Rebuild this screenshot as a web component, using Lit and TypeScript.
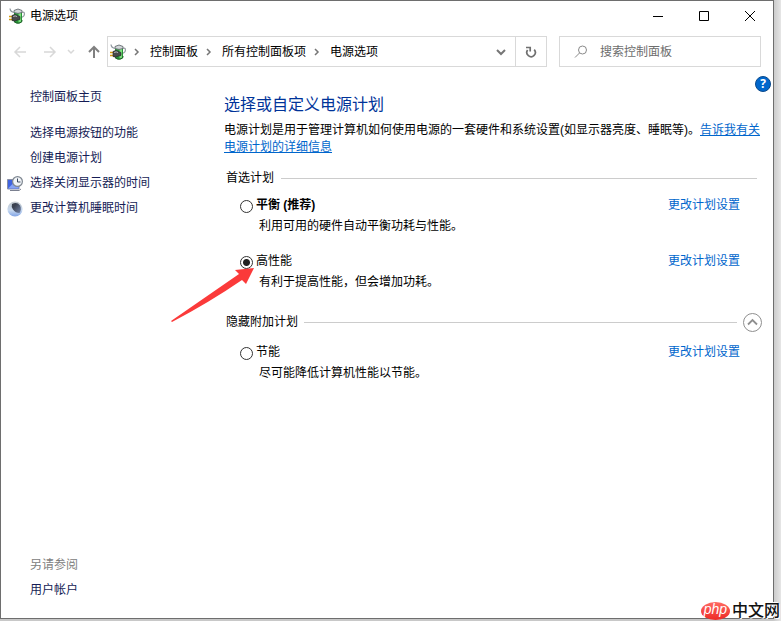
import { LitElement, html, css, svg, nothing } from "lit";
import { customElement, property, state } from "lit/decorators.js";
import { classMap } from "lit/directives/class-map.js";

interface Plan {
  id: string;
  name: string;
  description: string;
  recommended?: boolean;
}

interface Task {
  label: string;
  icon?: "display" | "sleep";
}

const PREFERRED: Plan[] = [
  { id: "balanced", name: "平衡 (推荐)", description: "利用可用的硬件自动平衡功耗与性能。", recommended: true },
  { id: "high", name: "高性能", description: "有利于提高性能，但会增加功耗。" },
];

const ADDITIONAL: Plan[] = [
  { id: "saver", name: "节能", description: "尽可能降低计算机性能以节能。" },
];

const TASKS: Task[] = [
  { label: "选择电源按钮的功能" },
  { label: "创建电源计划" },
  { label: "选择关闭显示器的时间", icon: "display" },
  { label: "更改计算机睡眠时间", icon: "sleep" },
];

const CRUMBS = ["控制面板", "所有控制面板项", "电源选项"];

const taskIcons = {
  display: html`
    <svg width="16" height="16" viewBox="0 0 16 16" aria-hidden="true">
      <path d="M0.5 3.500h11.500v9.500h-11.500z" fill="#3f63e0" stroke="#8a90a4" />
      <path d="M1 12.500l8-8h2.500v8z" fill="#86a3f5" />
      <path d="M3 14.500h9l2-1.500" stroke="#7b8090" fill="none" />
      <circle cx="10.500" cy="5.500" r="4.900" fill="#f1f4f7" stroke="#7f8791" stroke-width="1.200" />
      <path d="M10.500 2.500v3.500h3" stroke="#3b4a60" fill="none" />
    </svg>
  `,
  sleep: html`
    <svg width="16" height="16" viewBox="0 0 16 16" aria-hidden="true">
      <defs>
        <linearGradient id="moon" x1="0" y1="0" x2="0" y2="1">
          <stop offset="0" stop-color="#c3c9cc" />
          <stop offset=".6" stop-color="#c6d8f0" />
          <stop offset="1" stop-color="#7fa3e6" />
        </linearGradient>
        <linearGradient id="shade" x1="0" y1="0" x2="1" y2="1">
          <stop offset=".3" stop-color="#3a4150" />
          <stop offset="1" stop-color="#7486ac" />
        </linearGradient>
      </defs>
      <circle cx="8" cy="8" r="7.600" fill="url(#moon)" />
      <path d="M5 3q5-2.500 8 1.500 2 4-.5 7.500-4 0-6.500-3.500-2-3-1-5.500z" fill="url(#shade)" />
    </svg>
  `,
};

const arrow = (direction: "left" | "right" | "up") => {
  const shapes = {
    left: svg`<path d="M13 7H2M7 2L2 7l5 5" />`,
    right: svg`<path d="M1 7h11M7 2l5 5-5 5" />`,
    up: svg`<path stroke-width="2" d="M7 13V2M2 7l5-5 5 5" />`,
  };
  return html`<svg class="stroke" width="14" height="14" viewBox="0 0 14 14" aria-hidden="true">${shapes[direction]}</svg>`;
};

@customElement("power-icon")
class PowerIcon extends LitElement {
  static styles = css`
    :host {
      display: block;
      width: 16px;
      height: 16px;
    }
    svg {
      display: block;
    }
  `;

  render() {
    return html`
      <svg width="16" height="16" viewBox="0 0 16 16" aria-hidden="true">
        <path d="M12.500 4.500q3-1 3 1.500t-3 3.500" fill="none" stroke="#9aa1a6" stroke-width="1.200" />
        <path d="M5 3h8v11q-4 3-8 0z" fill="#279436" />
        <path d="M9.500 4h2.500v9.500q-1 1-2.500 1z" fill="#7fe07f" />
        <path d="M5 13.500q4 3.500 8 0V12" fill="none" stroke="#1d5a27" stroke-width=".9" />
        <path d="M5 2.500q4-3 8 0v2q-4 1.800-8 0z" fill="#d3d8da" stroke="#565d62" stroke-width=".8" />
        <path d="M1 .5q.3 3.500 4.300 4" fill="none" stroke="#8b949b" stroke-width="1.200" />
        <path d="M0 8.500h4M0 11.500h4" stroke="#d39b12" stroke-width="1.700" />
        <path d="M3 7.500q3-2 5.500 0l2.500 1v3l-2.500.5q-2.500 2-5.500.5z" fill="#48494b" stroke="#222425" stroke-width=".6" />
        <path d="M4.200 8.500q2-1.200 3.800 0" stroke="#b8babb" fill="none" />
      </svg>
    `;
  }
}

@customElement("title-bar")
class TitleBar extends LitElement {
  static styles = css`
    :host {
      display: flex;
      align-items: center;
      height: 29px;
      padding-left: 8px;
    }
    svg {
      display: block;
    }
    .title {
      flex: 1;
      margin: 0 0 0 5px;
      font-size: 12px;
      font-weight: 400;
      line-height: 20px;
    }
    .control {
      display: flex;
      align-items: center;
      justify-content: center;
      width: 46px;
      height: 28px;
      padding: 0;
      border: 0;
      background: none;
    }
    path {
      fill: none;
      stroke: #000;
    }
  `;

  render() {
    return html`
      <power-icon></power-icon>
      <h1 class="title">电源选项</h1>
      <button class="control" aria-label="最小化">
        <svg width="10" height="10"><path d="M0 5.500h10" /></svg>
      </button>
      <button class="control" aria-label="最大化">
        <svg width="10" height="10"><path d="M.5 .5h9v9h-9z" /></svg>
      </button>
      <button class="control" aria-label="关闭">
        <svg width="10" height="10"><path d="M0 0l10 10M10 0L0 10" /></svg>
      </button>
    `;
  }
}

@customElement("address-row")
class AddressRow extends LitElement {
  static styles = css`
    :host {
      display: flex;
      align-items: center;
      padding: 6px 12px 0 12px;
      font-size: 12px;
    }
    svg {
      display: block;
    }
    button {
      display: flex;
      align-items: center;
      justify-content: center;
      padding: 0;
      border: 0;
      background: none;
      color: #000;
      font: inherit;
      line-height: 20px;
    }
    .stroke {
      fill: none;
      stroke: currentColor;
      stroke-width: 1.5;
    }
    .travel {
      display: flex;
      align-items: center;
      width: 94px;
      color: #808080;
    }
    .travel button {
      width: 14px;
      color: inherit;
    }
    .travel button:disabled {
      color: #d8d8d8;
    }
    .travel .back {
      margin-right: 16px;
    }
    .travel .recent {
      width: 8px;
      margin: 0 12px 0 10px;
    }
    .address {
      display: flex;
      flex: 1;
      align-items: center;
      box-sizing: border-box;
      height: 31px;
      border: 1px solid #d9d9d9;
      padding-left: 2px;
    }
    .crumbs {
      display: flex;
      flex: 1;
      align-items: center;
    }
    .crumbs svg {
      margin: 0 10px 0 7px;
      color: #767676;
    }
    .drop {
      width: 28px;
      color: #767676;
    }
    .refresh {
      width: 31px;
      height: 29px;
      border-left: 1px solid #d9d9d9;
      color: #707070;
    }
    .search {
      display: flex;
      align-items: center;
      box-sizing: border-box;
      width: 202px;
      height: 31px;
      margin-left: 12px;
      border: 1px solid #d9d9d9;
      padding-left: 14px;
      color: #8a8a8a;
    }
    .search input {
      flex: 1;
      min-width: 0;
      margin-left: 12px;
      padding: 0;
      border: 0;
      outline: 0;
      background: none;
      font: inherit;
      line-height: 20px;
    }
    .search input::placeholder {
      color: #6d6d6d;
    }
    .search svg {
      stroke-width: 1;
    }
  `;

  render() {
    return html`
      <div class="travel">
        <button class="back" disabled aria-label="后退">${arrow("left")}</button>
        <button disabled aria-label="前进">${arrow("right")}</button>
        <button class="recent" disabled aria-label="最近的位置">
          <svg class="stroke" width="8" height="6"><path d="M1 1l3 3 3-3" /></svg>
        </button>
        <button aria-label="上移">${arrow("up")}</button>
      </div>
      <nav class="address" aria-label="地址">
        <power-icon></power-icon>
        <div class="crumbs">
          ${CRUMBS.map(
            (crumb) => html`
              <svg class="stroke" width="7" height="8"><path d="M2 1l3 3-3 3" /></svg>
              <button>${crumb}</button>
            `
          )}
        </div>
        <button class="drop" aria-label="展开">
          <svg class="stroke" width="10" height="8"><path d="M1 2l4 4 4-4" stroke-width="2" /></svg>
        </button>
        <button class="refresh" aria-label="刷新">
          <svg class="stroke" width="12" height="12" viewBox="0 0 12 12">
            <path stroke-width="1.700" d="M9.200 3.600A4.200 4.200 0 1 1 2.600 4" />
            <path stroke-width="1.700" d="M1 1.500h4.200v4" />
          </svg>
        </button>
      </nav>
      <label class="search">
        <svg class="stroke" width="14" height="14" viewBox="0 0 14 14" aria-hidden="true">
          <circle cx="8.500" cy="5" r="4" />
          <path d="M5.500 8L1 12.500" />
        </svg>
        <input type="text" aria-label="搜索控制面板" placeholder="搜索控制面板" />
      </label>
    `;
  }
}

@customElement("task-pane")
class TaskPane extends LitElement {
  static styles = css`
    :host {
      display: flex;
      flex-direction: column;
      justify-content: space-between;
      box-sizing: border-box;
      padding: 18px 0 15px 6px;
      font-size: 12px;
      line-height: 25px;
    }
    a {
      color: #151c55;
      text-decoration: none;
    }
    ul {
      margin: 11px 0 0;
      padding: 0;
      list-style: none;
    }
    .row {
      display: grid;
      grid-template-columns: 16px 1fr;
      column-gap: 7px;
      align-items: center;
    }
    .row > :last-child {
      grid-column: 2;
    }
    svg {
      display: block;
    }
    .caption {
      color: #808080;
    }
  `;

  render() {
    return html`
      <nav aria-label="任务">
        <div class="row"><a href="#home">控制面板主页</a></div>
        <ul>
          ${TASKS.map(
            (task) => html`
              <li class="row">
                ${task.icon ? taskIcons[task.icon] : nothing}
                <a href="#task">${task.label}</a>
              </li>
            `
          )}
        </ul>
      </nav>
      <nav aria-label="另请参阅">
        <div class="row"><span class="caption">另请参阅</span></div>
        <div class="row"><a href="#accounts">用户帐户</a></div>
      </nav>
    `;
  }
}

@customElement("plan-list")
class PlanList extends LitElement {
  @property() heading = "";
  @property({ attribute: false }) plans: Plan[] = [];
  @property() selected = "";
  @property({ type: Boolean }) collapsible = false;

  static styles = css`
    :host {
      display: block;
      font-size: 12px;
      line-height: 20px;
    }
    .header {
      display: flex;
      align-items: center;
      gap: 7px;
      height: 18px;
      margin: 0 5px 8px 2px;
    }
    .header.collapsible {
      gap: 6px;
      height: 24px;
      margin-right: 0;
    }
    h3 {
      margin: 0;
      font-size: 12px;
      font-weight: 400;
    }
    .rule {
      flex: 1;
      height: 1px;
      background: #cccccc;
    }
    .toggle {
      padding: 0;
      border: 0;
      background: none;
      color: #8f8f8f;
    }
    svg {
      display: block;
    }
    .plan {
      display: grid;
      grid-template-columns: 13px 1fr auto;
      column-gap: 3px;
      align-items: center;
      padding: 0 22px 0 16px;
    }
    .plan + .plan {
      margin-top: 15px;
    }
    input {
      appearance: none;
      box-sizing: border-box;
      width: 13px;
      height: 13px;
      margin: 3px 0 0;
      border: 1px solid #333;
      border-radius: 50%;
      background: #fff;
    }
    input:checked {
      background: radial-gradient(circle, #222 0 3px, #fff 4px);
    }
    .recommended {
      font-weight: 700;
    }
    p {
      grid-column: 2 / 4;
      margin: 1px 0 0 3px;
    }
    a {
      color: #0066cc;
      text-decoration: none;
    }
  `;

  private choose(id: string) {
    this.dispatchEvent(new CustomEvent("plan-chosen", { detail: id }));
  }

  render() {
    return html`
      <div class=${classMap({ header: true, collapsible: this.collapsible })}>
        <h3>${this.heading}</h3>
        <span class="rule"></span>
        ${this.collapsible
          ? html`
              <button class="toggle" aria-label="隐藏附加计划">
                <svg width="19" height="19" fill="none" stroke="currentColor">
                  <circle cx="9.500" cy="9.500" r="9" />
                  <path d="M5 11.500l4.500-4.500 4.500 4.500" stroke-width="1.800" />
                </svg>
              </button>
            `
          : nothing}
      </div>
      ${this.plans.map(
        (plan) => html`
          <div class="plan">
            <input
              type="radio"
              id=${plan.id}
              name="plan"
              .checked=${plan.id === this.selected}
              @change=${() => this.choose(plan.id)}
            />
            <label for=${plan.id} class=${classMap({ recommended: !!plan.recommended })}>${plan.name}</label>
            <a href="#settings">更改计划设置</a>
            <p>${plan.description}</p>
          </div>
        `
      )}
    `;
  }
}

@customElement("site-mark")
class SiteMark extends LitElement {
  static styles = css`
    :host {
      display: flex;
      align-items: center;
      gap: 2px;
      line-height: 20px;
    }
    .badge {
      width: 29px;
      height: 18px;
      border-radius: 50%;
      background: linear-gradient(#ff6a62, #ee2a26);
      color: #fff;
      font-size: 14px;
      font-style: italic;
      line-height: 15px;
      text-align: center;
    }
    .name {
      color: #111;
      font-size: 16px;
      font-weight: 500;
      text-shadow: 0 0 1px #fff, 1px 1px 0 #fff, -1px -1px 0 #fff;
    }
  `;

  render() {
    return html`<span class="badge">php</span><span class="name">中文网</span>`;
  }
}

@customElement("app-root")
class AppRoot extends LitElement {
  @state() private selected = "high";

  static styles = css`
    :host {
      display: flex;
      position: relative;
      box-sizing: border-box;
      min-height: 100vh;
      padding: 0 7px 2px 0;
      overflow: hidden;
      background: linear-gradient(to left, #e6e6e6, #c8c8c8 8px);
      color: #000;
      font-family: "Liberation Sans", "Noto Sans CJK SC", sans-serif;
      font-size: 12px;
    }
    .window {
      display: flex;
      flex: 1;
      flex-direction: column;
      border: 1px solid #6e6e6e;
      background: #fff;
    }
    .body {
      display: grid;
      flex: 1;
      grid-template-columns: 223px 1fr;
    }
    main {
      display: flex;
      flex-direction: column;
      padding-top: 9px;
    }
    .help {
      align-self: flex-end;
      width: 16px;
      height: 16px;
      margin-right: 2px;
      padding: 0;
      border: 1px solid #0b4a8c;
      border-radius: 50%;
      background: #0067cc;
      color: #fff;
      font: 700 12px/14px "Open Sans", sans-serif;
      text-align: center;
    }
    .content {
      position: relative;
      padding: 3px 11px 0 0;
    }
    h2 {
      margin: 0 0 7px;
      color: #003399;
      font-size: 16px;
      font-weight: 400;
      line-height: 20px;
    }
    .intro {
      margin: 0 0 13px;
      line-height: 17px;
    }
    .intro a {
      color: #0066cc;
    }
    .more {
      margin-top: 18px;
    }
    .pointer {
      position: absolute;
      top: 172px;
      left: -54px;
      pointer-events: none;
    }
    .mark {
      position: absolute;
      right: 1px;
      bottom: 0;
    }
  `;

  private onChosen(event: CustomEvent<string>) {
    this.selected = event.detail;
  }

  render() {
    return html`
      <div class="window" lang="zh-CN">
        <title-bar></title-bar>
        <address-row></address-row>
        <div class="body">
          <task-pane></task-pane>
          <main>
            <button class="help" aria-label="帮助">?</button>
            <div class="content">
              <h2>选择或自定义电源计划</h2>
              <p class="intro">电源计划是用于管理计算机如何使用电源的一套硬件和系统设置(如显示器亮度、睡眠等)。<a href="#more">告诉我有关电源计划的详细信息</a></p>
              <plan-list
                heading="首选计划"
                .plans=${PREFERRED}
                .selected=${this.selected}
                @plan-chosen=${this.onChosen}
              ></plan-list>
              <plan-list
                class="more"
                heading="隐藏附加计划"
                collapsible
                .plans=${ADDITIONAL}
                .selected=${this.selected}
                @plan-chosen=${this.onChosen}
              ></plan-list>
              <svg class="pointer" width="86" height="58" aria-hidden="true">
                <path d="M1 57L69 10l-4-4 19-2-8 16-4-4Q40 38 2 58z" fill="#fb3a3a" />
              </svg>
            </div>
          </main>
        </div>
      </div>
      <site-mark class="mark" lang="zh-CN"></site-mark>
    `;
  }
}
